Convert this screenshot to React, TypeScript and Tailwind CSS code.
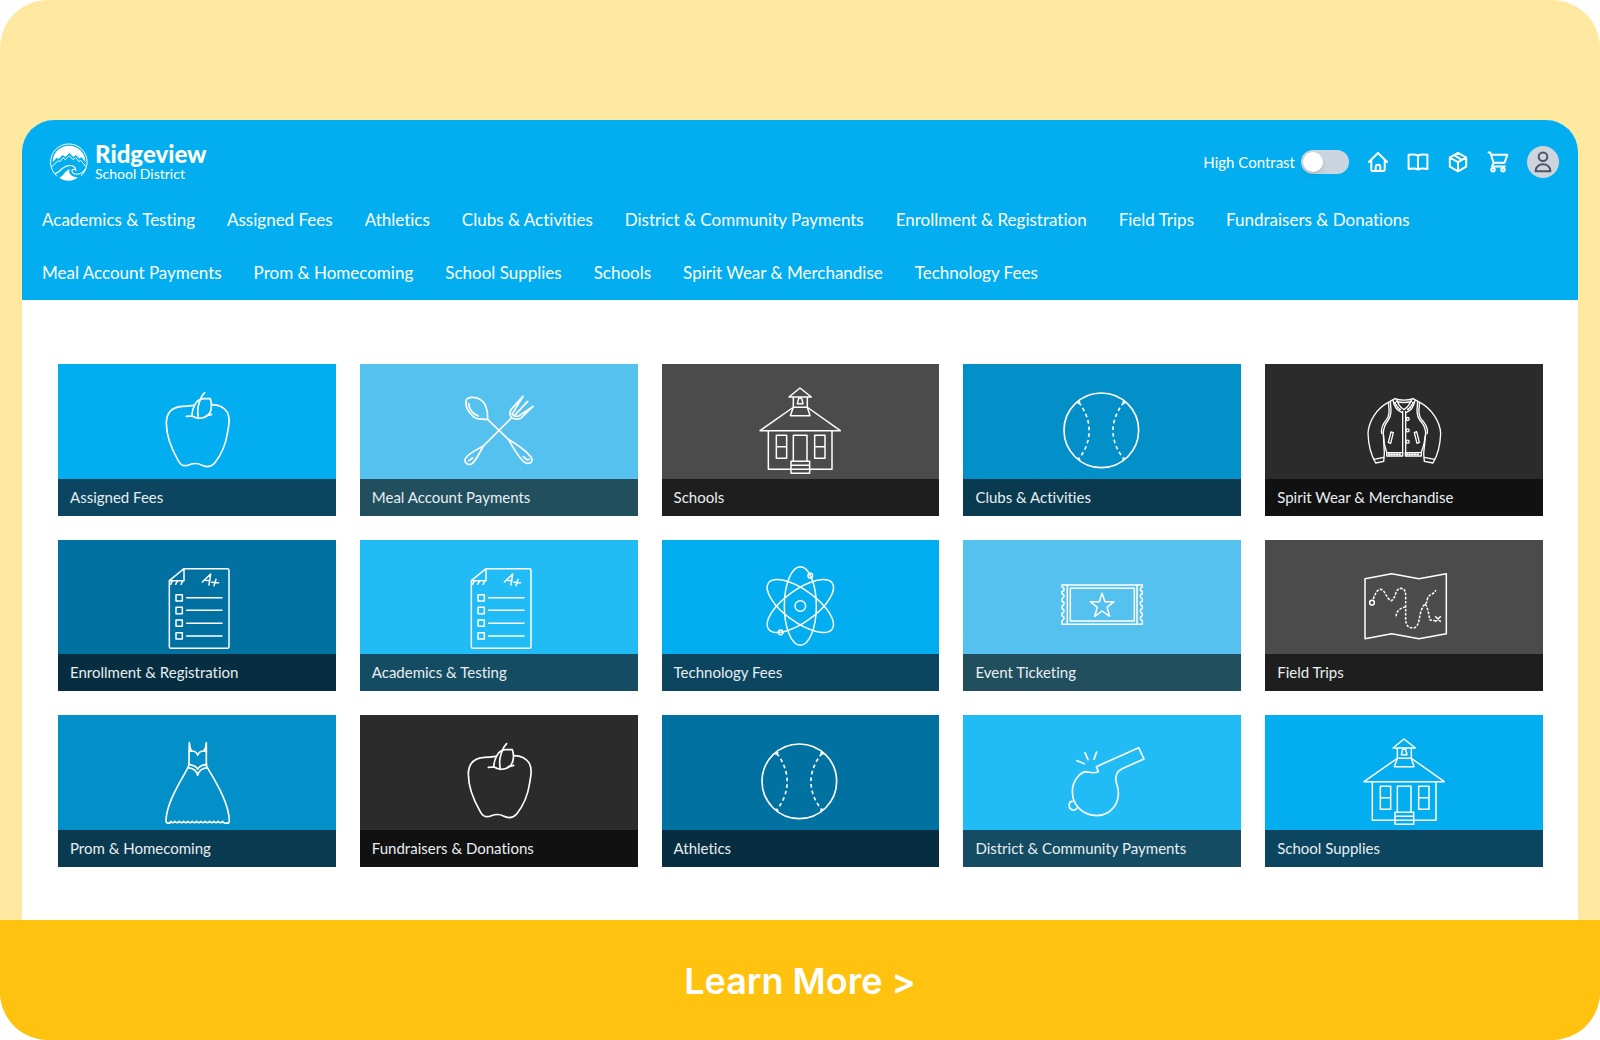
import type { ReactNode } from "react";

const navItems = [
  "Academics & Testing",
  "Assigned Fees",
  "Athletics",
  "Clubs & Activities",
  "District & Community Payments",
  "Enrollment & Registration",
  "Field Trips",
  "Fundraisers & Donations",
  "Meal Account Payments",
  "Prom & Homecoming",
  "School Supplies",
  "Schools",
  "Spirit Wear & Merchandise",
  "Technology Fees",
];

function Art({ box, children }: { box: string; children: ReactNode }) {
  return (
    <svg
      viewBox={box}
      className="h-[114px] w-24"
      fill="none"
      stroke="#fff"
      strokeWidth="5"
      strokeLinecap="round"
      strokeLinejoin="round"
      aria-hidden="true"
    >
      {children}
    </svg>
  );
}

function Apple() {
  return (
    <Art box="27 -18 288 342">
      <path d="M161 106C148 108 140 109 127 109C97 111 79 128 79 160C79 200 96 240 116 274C124 288 134 290 148 284C162 279 174 279 184 285C200 293 214 290 224 279C244 254 258 220 263 186C268 158 270 142 262 127C252 112 236 104 216 104" />
      <path d="M194 68C184 78 178 92 174 112C172 124 173 134 175 145" />
      <path d="M139 139C146 138 150 138 156 138C168 146 190 148 201 137L215 133" />
      <path d="M155 138C157 112 168 88 190 86H211C213 92 215 104 214 112C213 124 208 134 199 138" />
    </Art>
  );
}

function Utensils() {
  return (
    <Art box="933 -18 288 342">
      <path d="M1043 148C1028 148 1012 150 1000 140C984 127 974 106 979 90C984 80 1006 80 1020 88C1038 99 1044 118 1043 148ZM1043 148L1105 208" />
      <path d="M986 101C988 120 998 132 1015 138" />
      <path d="M1105 208C1128 222 1156 240 1172 260C1182 272 1172 284 1158 279C1142 272 1122 238 1105 208Z" />
      <path d="M1150 260L1162 270L1168 268" />
      <path d="M1115 143L1032 226C1022 240 1010 270 996 281C984 288 972 278 976 266C984 250 1014 238 1032 226" />
      <path d="M986 272L998 264" />
      <path d="M1149 79L1113 119C1108 130 1110 139 1115 143C1122 148 1132 149 1142 145L1179 109M1163 94L1124 136M1149 79L1118 130M1179 109L1136 138M1116 132C1122 140 1130 140 1136 138" />
    </Art>
  );
}

function School() {
  return (
    <Art box="37 -18 288 342">
      <g strokeWidth="4.5">
        <path d="M148 81L181 54L215 81ZM161 81V112H203V81M161 112L152 137H211L203 112" />
        <path d="M177 85H186L190 101H173Z" />
        <path d="M158 114L61 182H302L206 114M86 182V298H154M210 298H277V182" />
        <path d="M110 196H141V265H110ZM110 230H141M225 196H256V265H225ZM225 230H256" />
        <path d="M161 274V196H202V274M154 274H210V310H154ZM154 286H210M154 298H210" />
      </g>
    </Art>
  );
}

function Ball() {
  return (
    <Art box="942 -18 288 342">
      <circle cx="1084" cy="181" r="112" />
      <path d="M1016 97C1058 150 1058 214 1016 267M1152 97C1108 150 1108 214 1152 267" strokeDasharray="11 9" strokeLinecap="butt" />
      <path d="M1014 99L1019 95M1149 95L1154 99M1014 265L1019 269M1149 269L1154 265" />
    </Art>
  );
}

function Jacket() {
  return (
    <Art box="48 -18 288 342">
      <g strokeWidth="4">
        <path d="M165 86L149 95C110 114 86 154 84 190C85 220 92 254 107 279L131 274L133 250L130 192" />
        <path d="M219 86L235 95C274 114 300 154 302 190C301 220 294 254 279 279L253 274L251 250L257 192" />
        <path d="M102 268L131 262M284 268L253 262" />
        <path d="M145 97C147 114 152 132 140 148C128 162 122 174 125 190M151 95C153 116 156 134 145 150C134 164 130 176 130 190L133 222L140 247V258H188V248H140" />
        <path d="M239 97C237 114 232 132 244 148C258 162 264 174 262 190M233 95C231 116 228 134 239 150C252 164 257 176 257 190L252 222L244 247V258H196V248H244" />
        <path d="M165 86C180 92 204 92 219 86M169 94C182 98 202 98 215 94M159 91C162 108 170 122 187 128M170 88C174 102 180 112 192 119M225 91C222 108 214 122 198 128M215 88C210 102 204 112 192 119M188 124V250M197 124V250" />
        <path d="M165 98C168 106 174 115 184 121M219 98C216 106 210 115 200 121M146 253H186M200 253H240" strokeDasharray="2 6" strokeWidth="6" />
        <circle cx="203" cy="147" r="4.5" />
        <circle cx="203" cy="181" r="4.5" />
        <circle cx="203" cy="215" r="4.5" />
        <path d="M153 186L160 188L152 220L145 217ZM223 188L230 185L238 217L231 220Z" />
      </g>
    </Art>
  );
}

function Paper() {
  return (
    <Art box="27 -30 288 342">
      <g strokeWidth="4.5">
        <path d="M132 56H262Q267 56 267 61V290Q267 295 262 295H93Q88 295 88 290V92ZM132 56V92H88" />
        <path d="M97 92L92 103M113 92L107 103M129 92L123 103" />
        <path d="M187 96L212 72L207 105M195 91L210 92M228 88L222 107M215 97L236 98" />
        <path d="M108 134H127V153H108ZM108 172H127V191H108ZM108 210H127V229H108ZM108 248H127V267H108Z" />
        <path d="M140 143H246M140 181H246M140 220H246M140 258H246" />
      </g>
    </Art>
  );
}

function Atom() {
  return (
    <Art box="36 -30 288 342">
      <g strokeWidth="4.5">
        <ellipse cx="181" cy="168" rx="48" ry="118" />
        <ellipse cx="181" cy="168" rx="48" ry="118" transform="rotate(54 181 168)" />
        <ellipse cx="181" cy="168" rx="48" ry="118" transform="rotate(-54 181 168)" />
        <circle cx="181" cy="168" r="16" />
        <circle cx="211" cy="77" r="7" />
        <circle cx="122" cy="247" r="7" />
      </g>
    </Art>
  );
}

function Ticket() {
  return (
    <Art box="942 -30 288 342">
      <g strokeWidth="4.5">
        <path d="M966 105H1207V112C1199 112 1199 123 1207 124C1207 130 1207 130 1207 132C1199 133 1199 144 1207 146V154C1199 155 1199 166 1207 168V176C1199 177 1199 188 1207 190V198C1199 199 1199 210 1207 212V223H966V212C974 210 974 199 966 198V190C974 188 974 177 966 176V168C974 166 974 155 966 154V146C974 144 974 133 966 132V124C974 123 974 112 966 112Z" />
        <path d="M982 105V223M1191 105V223M991 115H1183V213H991Z" />
        <path d="M1086 130L1095 155H1122L1101 172L1109 199L1086 183L1064 199L1072 172L1051 155H1078Z" />
      </g>
    </Art>
  );
}

function TreasureMap() {
  return (
    <Art box="48 -30 288 342">
      <g strokeWidth="4.5">
        <path d="M75 86L155 71L237 86L319 71V251L237 266L155 251L75 266Z" />
        <circle cx="96" cy="158" r="7" />
        <path
          d="M100 147C106 128 114 118 122 118C136 120 140 148 153 152C168 148 164 116 182 115C198 116 197 130 197 145V205C197 228 206 234 220 234C240 232 236 196 246 176C252 160 262 162 262 148C266 130 284 134 287 120M197 171C180 174 166 184 169 204M256 162C266 180 266 196 270 210L286 212"
          strokeDasharray="8 4"
          strokeLinecap="butt"
        />
        <path d="M287 200L301 214M301 200L287 214" />
      </g>
    </Art>
  );
}

function Dress() {
  return (
    <Art box="27 -30 288 342">
      <path d="M148 53C150 68 152 76 156 78C164 78 170 82 173 91C176 82 182 78 190 78C194 76 198 68 199 53V122L202 128C230 174 268 238 268 289Q267 296 259 294M148 53C147 78 147 100 147 118L144 128C116 178 78 238 78 289Q79 296 88 294" />
      <path d="M148 79L156 78M199 79L190 78" />
      <path d="M147 118C158 120 170 124 173 133C176 124 188 120 200 118M144 128C158 130 170 136 173 151C176 136 188 130 202 128" />
      <path d="M88 294Q91 295 92 289Q97 297 105 289Q110 297 118 289Q123 297 131 289Q136 297 144 289Q149 297 157 289Q162 297 170 289Q175 297 183 289Q188 297 196 289Q201 297 209 289Q214 297 222 289Q227 297 235 289Q240 297 248 289Q253 297 259 294" />
    </Art>
  );
}

function Whistle() {
  return (
    <Art box="43 -30 288 342">
      <path d="M137 140C150 140 158 148 176 140L170 125L297 68L313 102L247 131C232 138 224 156 231 176C244 212 232 246 204 263C176 279 138 272 116 248C92 222 94 180 112 158Q124 143 137 140Z" />
      <path d="M98 229C88 228 86 244 92 251C98 258 108 256 111 250M112 107L134 116M136 83L145 104M171 81L163 103" />
    </Art>
  );
}

type Tile = { label: string; art: ReactNode; top: string; bar: string };

const sky = { top: "bg-[#02aeef]", bar: "bg-[#0b4560]" };
const pale = { top: "bg-[#54c1ee]", bar: "bg-[#224f5e]" };
const gray = { top: "bg-[#4b4b4b]", bar: "bg-[#1e1e1e]" };
const blue = { top: "bg-[#038fc8]", bar: "bg-[#0a3a50]" };
const black = { top: "bg-[#2b2b2b]", bar: "bg-[#111111]" };
const deep = { top: "bg-[#0071a0]", bar: "bg-[#062d40]" };
const bright = { top: "bg-[#21bbf6]", bar: "bg-[#144c63]" };

const tiles: Tile[] = [
  { label: "Assigned Fees", art: <Apple />, ...sky },
  { label: "Meal Account Payments", art: <Utensils />, ...pale },
  { label: "Schools", art: <School />, ...gray },
  { label: "Clubs & Activities", art: <Ball />, ...blue },
  { label: "Spirit Wear & Merchandise", art: <Jacket />, ...black },
  { label: "Enrollment & Registration", art: <Paper />, ...deep },
  { label: "Academics & Testing", art: <Paper />, ...bright },
  { label: "Technology Fees", art: <Atom />, ...sky },
  { label: "Event Ticketing", art: <Ticket />, ...pale },
  { label: "Field Trips", art: <TreasureMap />, ...gray },
  { label: "Prom & Homecoming", art: <Dress />, ...blue },
  { label: "Fundraisers & Donations", art: <Apple />, ...black },
  { label: "Athletics", art: <Ball />, ...deep },
  { label: "District & Community Payments", art: <Whistle />, ...bright },
  { label: "School Supplies", art: <School />, ...sky },
];

function Logo() {
  return (
    <a href="#home" className="flex items-center gap-1.5 text-white">
      <svg viewBox="27 65 120 120" className="size-10" fill="none" stroke="#fff" strokeLinejoin="round" strokeLinecap="round" aria-hidden="true">
        <path d="M50 167A55 55 0 1 1 124 166" strokeWidth="3" />
        <path d="M38 126C38 96 60 76 87 76C114 76 136 96 136 126L124 110L118 115L108 104L100 110L88 98L76 110L68 104L56 116L50 112Z" fill="#fff" stroke="none" />
        <path d="M36 139L54 121L60 124L69 112L76 118L88 106L99 118L107 112L117 124L122 120L138 139" strokeWidth="3" />
        <path d="M46 160C60 156 66 138 86 136C98 134 107 140 108 150C104 145 95 146 96 152C98 164 122 168 136 146" strokeWidth="3.5" />
        <path d="M58 172C72 166 76 150 89 146C84 158 92 170 114 171C106 178 97 181 87 181C75 181 65 178 58 172Z" fill="#fff" stroke="none" />
      </svg>
      <span className="flex flex-col">
        <span className="text-2xl leading-6 font-black">Ridgeview</span>
        <span className="text-sm leading-4">School District</span>
      </span>
    </a>
  );
}

function HeaderIcon({ label, children }: { label: string; children: ReactNode }) {
  return (
    <button type="button" aria-label={label} className="size-6">
      <svg viewBox="0 0 24 24" className="size-6" fill="none" stroke="#fff" strokeWidth="2" strokeLinecap="round" strokeLinejoin="round">
        {children}
      </svg>
    </button>
  );
}

export default function App() {
  return (
    <div className="bg-white font-['Lato',sans-serif] [font-variant-ligatures:none]">
      <div className="flex min-h-screen flex-col overflow-hidden rounded-[48px] bg-[#ffe8a0] pt-[120px]">
        <div className="mx-[22px] flex-1 overflow-hidden rounded-t-[32px] bg-white">
          <header className="bg-[#02aeef] pt-[22px] pr-[19px] pb-px pl-5 text-white">
            <div className="flex h-10 items-center justify-between pl-[7px]">
              <Logo />
              <div className="flex items-center gap-[17px]">
                <label className="flex items-center gap-1.5 text-[15px]">
                  High Contrast
                  <input
                    type="checkbox"
                    role="switch"
                    className="h-6 w-12 cursor-pointer appearance-none rounded-full bg-[#cbd5e0] p-0.5 before:block before:size-5 before:rounded-full before:bg-white before:shadow-md checked:before:ml-6"
                  />
                </label>
                <div className="flex items-center gap-4">
                  <HeaderIcon label="Home">
                    <path d="M2.8 12L12 3L21.2 12M5.3 10V19.5Q5.3 21 6.8 21H17.2Q18.7 21 18.7 19.5V10" />
                    <path d="M9.7 21V17Q9.7 14.7 12 14.7Q14.3 14.7 14.3 17V21" />
                  </HeaderIcon>
                  <HeaderIcon label="Catalog">
                    <path d="M12 5.6Q9 4 2.6 4.8V19Q9 18 12 19.6Q15 18 21.4 19V4.8Q15 4 12 5.6ZM12 5.6V19.6" />
                  </HeaderIcon>
                  <HeaderIcon label="Orders">
                    <path d="M12 2.9L20.2 7.5V16.7L12 21.3L3.8 16.7V7.5ZM3.8 7.5L12 12.2L20.2 7.5M12 12.2V21.3" />
                    <path d="M8 5.2L16 9.8" />
                  </HeaderIcon>
                  <HeaderIcon label="Cart">
                    <path d="M2.6 2.6H4.3L5 4.8H21.3L18.6 12.8H7.6L5 4.8M7.6 12.8L6 16.6H18.8" />
                    <circle cx="7" cy="19.7" r="1.7" />
                    <circle cx="17" cy="19.7" r="1.7" />
                  </HeaderIcon>
                </div>
                <button type="button" aria-label="Account" className="flex size-8 items-center justify-center rounded-full bg-[#cfd4dc]">
                  <svg viewBox="0 0 24 24" className="size-6" fill="none" stroke="#4a5568" strokeWidth="2" strokeLinejoin="round">
                    <circle cx="12" cy="6.7" r="4.3" />
                    <path d="M4.6 21.2C4.6 12 19.4 12 19.4 21.2Z" />
                  </svg>
                </button>
              </div>
            </div>
            <nav className="mt-[11px] flex flex-wrap gap-x-8 pr-24">
              {navItems.map((item) => (
                <a key={item} href="#category" className="flex h-[53px] items-center text-[17px]">
                  {item}
                </a>
              ))}
            </nav>
          </header>
          <main className="grid grid-cols-5 gap-6 pt-16 pr-[35px] pb-[52px] pl-9">
            {tiles.map((tile) => (
              <a key={tile.label} href="#tile" className="flex aspect-[11/6] flex-col">
                <span className={`flex min-h-0 flex-1 items-start justify-center ${tile.top}`}>{tile.art}</span>
                <span className={`flex h-[37px] items-center px-3 text-[15px] text-[#e8eef1] ${tile.bar}`}>{tile.label}</span>
              </a>
            ))}
          </main>
        </div>
        <a href="#learn-more" className="flex h-[120px] items-center justify-center bg-[#ffc20f] pt-0.5 font-['Inter',sans-serif] text-4xl font-semibold text-white">
          Learn More &gt;
        </a>
      </div>
    </div>
  );
}
